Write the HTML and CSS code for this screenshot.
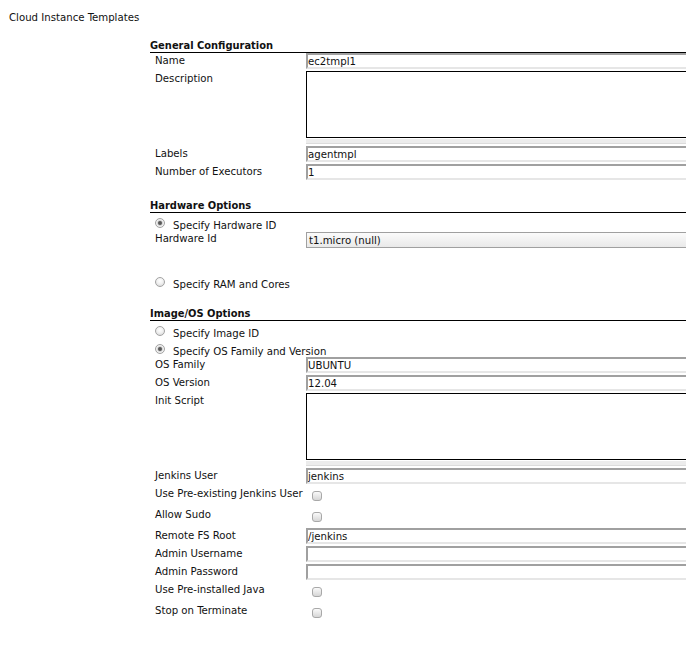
FILE: index.html
```html
<!DOCTYPE html>
<html>
<head>
<meta charset="utf-8">
<link rel="stylesheet" href="styles.css">
</head>
<body>
<div class="page-title">Cloud Instance Templates</div>
<div class="form">
  <section class="section">
    <h2 class="section-title">General Configuration</h2>
    <div class="row"><span class="label">Name</span><input class="text" type="text" value="ec2tmpl1"></div>
    <div class="row row-gap"><span class="label">Description</span><div class="area-wrap"><textarea class="area"></textarea><div class="band"></div></div></div>
    <div class="row row-gap"><span class="label">Labels</span><input class="text" type="text" value="agentmpl"></div>
    <div class="row row-gap"><span class="label">Number of Executors</span><input class="text" type="text" value="1"></div>
  </section>

  <section class="section">
    <h2 class="section-title">Hardware Options</h2>
    <div class="radio-row"><input class="radio" type="radio" name="hw" checked><span>Specify Hardware ID</span></div>
    <div class="row"><span class="label">Hardware Id</span><div class="select">t1.micro (null)</div></div>
    <div class="radio-row ram"><input class="radio" type="radio" name="hw"><span>Specify RAM and Cores</span></div>
  </section>

  <section class="section">
    <h2 class="section-title">Image/OS Options</h2>
    <div class="radio-row"><input class="radio" type="radio" name="img"><span>Specify Image ID</span></div>
    <div class="radio-row"><input class="radio" type="radio" name="img" checked><span>Specify OS Family and Version</span></div>
    <div class="row"><span class="label">OS Family</span><input class="text" type="text" value="UBUNTU"></div>
    <div class="row row-gap"><span class="label">OS Version</span><input class="text" type="text" value="12.04"></div>
    <div class="row row-gap"><span class="label">Init Script</span><div class="area-wrap"><textarea class="area"></textarea><div class="band"></div></div></div>
    <div class="row row-gap"><span class="label">Jenkins User</span><input class="text" type="text" value="jenkins"></div>
    <div class="row row-gap check-row"><span class="label">Use Pre-existing Jenkins User</span><div><input class="check" type="checkbox"></div></div>
    <div class="row row-gap check-row"><span class="label">Allow Sudo</span><div><input class="check" type="checkbox"></div></div>
    <div class="row row-gap"><span class="label">Remote FS Root</span><input class="text" type="text" value="/jenkins"></div>
    <div class="row row-gap"><span class="label">Admin Username</span><input class="text" type="text" value=""></div>
    <div class="row row-gap"><span class="label">Admin Password</span><input class="text" type="text" value=""></div>
    <div class="row row-gap check-row"><span class="label">Use Pre-installed Java</span><div><input class="check" type="checkbox"></div></div>
    <div class="row row-gap check-row"><span class="label">Stop on Terminate</span><div><input class="check" type="checkbox"></div></div>
  </section>
</div>
</body>
</html>
```
FILE: styles.css
```css
html, body {
  margin: 0;
  padding: 0;
  overflow: hidden;
  background: #fff;
}
body {
  font-family: "DejaVu Sans Condensed", "DejaVu Sans", sans-serif;
  font-size: 11.3px;
  line-height: 14px;
  color: #111;
}
.page-title {
  padding: 11px 0 0 9px;
  height: 13px;
  line-height: 14px;
}
.form {
  margin-left: 150px;
  width: 570px;
}
.section {
  margin-top: 18px;
}
.section:first-child {
  margin-top: 14px;
}
.section-title {
  margin: 0;
  font-size: 11px;
  font-weight: bold;
  line-height: 14px;
  padding-top: 1px;
  height: 13px;
  border-bottom: 1px solid #000;
}
.row {
  display: grid;
  grid-template-columns: 156px 1fr;
  align-items: start;
}
.row-gap {
  margin-top: 2px;
}
.label {
  padding-left: 5px;
  padding-top: 1px;
  height: 15px;
  white-space: nowrap;
  line-height: 14px;
}
.text {
  display: block;
  box-sizing: border-box;
  width: 100%;
  height: 16px;
  margin: 0;
  padding: 1px 0 0 0;
  border: none;
  border-top: 2px solid #a0a0a0;
  border-left: 2px solid #a0a0a0;
  border-bottom: 2px solid #e6e6e6;
  background: #fff;
  font-family: inherit;
  font-size: 11.3px;
  line-height: 11px;
  color: #111;
  outline: none;
}
.area-wrap {
  display: flex;
  flex-direction: column;
}
.area {
  display: block;
  box-sizing: border-box;
  width: 100%;
  height: 67px;
  margin: 0;
  padding: 0;
  border: 1px solid #000;
  resize: none;
  background: #fff;
}
.band {
  margin-top: 1px;
  height: 5px;
  background: #ececec;
  border-bottom: 1px solid #dcdcdc;
  box-sizing: border-box;
}
.radio-row {
  display: flex;
  align-items: flex-start;
  height: 13px;
  padding-top: 5px;
  padding-left: 5px;
}
.radio-row span {
  padding-top: 1px;
  line-height: 14px;
  white-space: nowrap;
}
.radio-row.ram {
  margin-top: 24px;
  height: 11px;
}
.radio {
  appearance: none;
  -webkit-appearance: none;
  box-sizing: border-box;
  width: 10px;
  height: 10px;
  margin: 0 8px 0 0;
  border: 1px solid #a3a3a3;
  border-radius: 50%;
  background: radial-gradient(circle at 50% 35%, #ffffff 0%, #f1f1f1 45%, #d2d2d2 100%);
  flex: none;
}
.radio:checked {
  background: radial-gradient(circle at 50% 50%, #4a4a4a 0, #6a6a6a 1.6px, #dcdcdc 2.6px, #f4f4f4 3.4px, #d2d2d2 100%);
}
.select {
  box-sizing: border-box;
  height: 16px;
  margin-top: 1px;
  padding-left: 2px;
  padding-top: 1px;
  border: 1px solid #a0a0a0;
  background: linear-gradient(#fbfbfb, #e9e9e9);
  line-height: 13px;
  white-space: nowrap;
}
.check-row {
  height: 19px;
}
.check {
  appearance: none;
  -webkit-appearance: none;
  display: block;
  box-sizing: border-box;
  width: 10px;
  height: 10px;
  margin: 5px 0 0 6px;
  border: 1px solid #a8a8a8;
  border-radius: 3px;
  background: linear-gradient(#fafafa, #d6d6d6);
}
```
